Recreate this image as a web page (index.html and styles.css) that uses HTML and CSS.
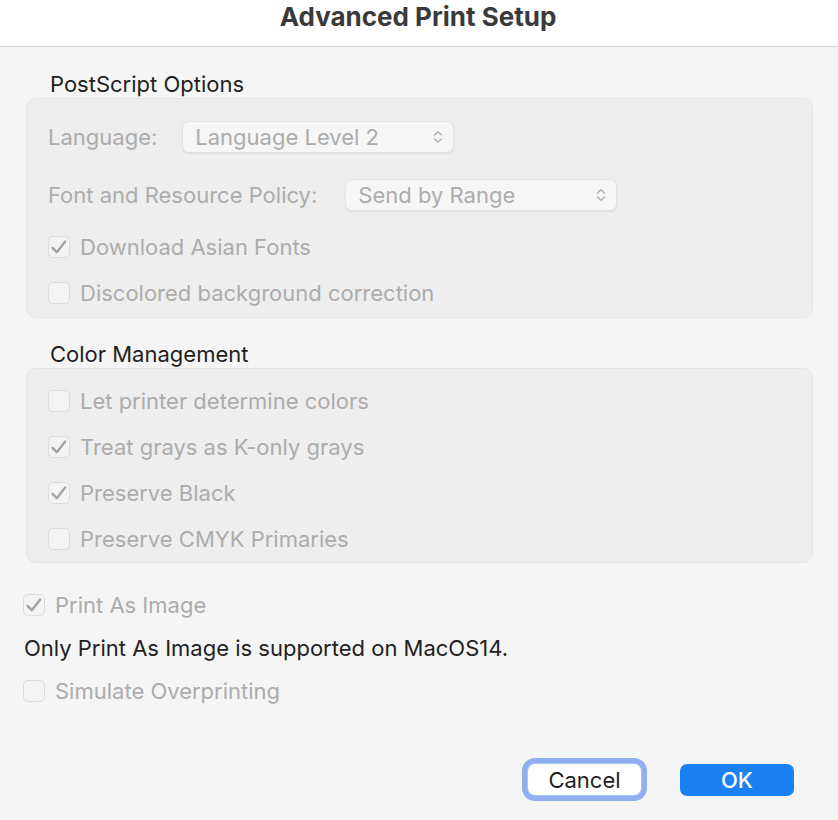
FILE: index.html
```html
<!DOCTYPE html>
<html>
<head>
<meta charset="utf-8">
<title>Advanced Print Setup</title>
<link rel="stylesheet" href="styles.css">
</head>
<body>
<div class="window">
  <header class="titlebar">Advanced Print Setup</header>
  <main class="content">
    <div class="section-title">PostScript Options</div>
    <div class="group group-ps">
      <div class="field-row row-lang">
        <span class="label">Language:</span>
        <div class="popup popup-lang">
          <span>Language Level 2</span>
          <svg class="chev" width="10" height="14" viewBox="0 0 10 14"><path d="M1.5 5 L5 1.8 L8.5 5 M1.5 9 L5 12.2 L8.5 9" fill="none" stroke="#b4b4b4" stroke-width="1.6" stroke-linecap="round" stroke-linejoin="round"/></svg>
        </div>
      </div>
      <div class="field-row row-font">
        <span class="label">Font and Resource Policy:</span>
        <div class="popup popup-font">
          <span>Send by Range</span>
          <svg class="chev" width="10" height="14" viewBox="0 0 10 14"><path d="M1.5 5 L5 1.8 L8.5 5 M1.5 9 L5 12.2 L8.5 9" fill="none" stroke="#b4b4b4" stroke-width="1.6" stroke-linecap="round" stroke-linejoin="round"/></svg>
        </div>
      </div>
      <div class="check-row row-after-font">
        <span class="box checked"><svg width="18" height="16" viewBox="0 0 18 16"><path d="M2.5 8.8 L6.8 13.2 L15.2 2.6" fill="none" stroke="#a3a3a3" stroke-width="2.4" stroke-linecap="round" stroke-linejoin="round"/></svg></span>
        <span class="label">Download Asian Fonts</span>
      </div>
      <div class="check-row">
        <span class="box"></span>
        <span class="label">Discolored background correction</span>
      </div>
    </div>

    <div class="section-title section-title-2">Color Management</div>
    <div class="group group-cm">
      <div class="check-row">
        <span class="box"></span>
        <span class="label">Let printer determine colors</span>
      </div>
      <div class="check-row">
        <span class="box checked"><svg width="18" height="16" viewBox="0 0 18 16"><path d="M2.5 8.8 L6.8 13.2 L15.2 2.6" fill="none" stroke="#a3a3a3" stroke-width="2.4" stroke-linecap="round" stroke-linejoin="round"/></svg></span>
        <span class="label">Treat grays as K-only grays</span>
      </div>
      <div class="check-row">
        <span class="box checked"><svg width="18" height="16" viewBox="0 0 18 16"><path d="M2.5 8.8 L6.8 13.2 L15.2 2.6" fill="none" stroke="#a3a3a3" stroke-width="2.4" stroke-linecap="round" stroke-linejoin="round"/></svg></span>
        <span class="label">Preserve Black</span>
      </div>
      <div class="check-row">
        <span class="box"></span>
        <span class="label">Preserve CMYK Primaries</span>
      </div>
    </div>

    <div class="outer">
      <div class="check-row">
        <span class="box checked"><svg width="18" height="16" viewBox="0 0 18 16"><path d="M2.5 8.8 L6.8 13.2 L15.2 2.6" fill="none" stroke="#a3a3a3" stroke-width="2.4" stroke-linecap="round" stroke-linejoin="round"/></svg></span>
        <span class="label">Print As Image</span>
      </div>
      <div class="note">Only Print As Image is supported on MacOS14.</div>
      <div class="check-row">
        <span class="box"></span>
        <span class="label">Simulate Overprinting</span>
      </div>
    </div>

    <div class="buttons">
      <button class="btn btn-cancel">Cancel</button>
      <button class="btn btn-ok">OK</button>
    </div>
  </main>
</div>
</body>
</html>
```

FILE: styles.css
```css
html, body {
  margin: 0;
  padding: 0;
}
body {
  background: #f5f5f5;
  font-family: Inter, "Liberation Sans", sans-serif;
  font-size: 22px;
  width: 838px;
  height: 820px;
  overflow: hidden;
}
.window {
  display: flex;
  flex-direction: column;
}
.titlebar {
  height: 46px;
  line-height: 34px;
  background: #ffffff;
  border-bottom: 1px solid #d6d6d6;
  text-align: center;
  font-weight: 700;
  font-size: 26px;
  color: #3a3a3a;
  padding-right: 2px;
}
.content {
  padding: 0 25px 0 26px;
  display: flex;
  flex-direction: column;
}
.section-title {
  margin-top: 25px;
  height: 24px;
  line-height: 24px;
  padding-left: 24px;
  color: #1f1f1f;
}
.section-title-2 {
  margin-top: 24px;
}
.group {
  margin-top: 2px;
  background: #eeeeee;
  border: 1px solid #e5e5e5;
  border-radius: 10px;
  display: flex;
  flex-direction: column;
  padding-left: 20px;
}
.group-ps {
  padding-top: 15px;
  height: 203px;
}
.group-cm {
  padding-top: 9px;
  height: 184px;
}
.label {
  color: #acacac;
  white-space: nowrap;
}
.field-row {
  height: 46px;
  display: flex;
  align-items: center;
}
.row-lang .label { margin-left: 1px; margin-right: 25px; }
.row-font { margin-top: 12px; }
.row-font .label { margin-left: 1px; margin-right: 28px; }
.row-after-font { margin-top: 6px; }
.popup {
  height: 32px;
  box-sizing: border-box;
  background: #f6f6f6;
  border: 1px solid #e3e3e3;
  border-radius: 7px;
  box-shadow: 0 1px 1.5px rgba(0, 0, 0, 0.08);
  display: flex;
  align-items: center;
  justify-content: space-between;
  padding: 0 10px 0 12px;
  color: #acacac;
}
.popup-lang { width: 272px; }
.popup-font { width: 272px; }
.chev { display: block; }
.check-row {
  height: 46px;
  display: flex;
  align-items: center;
}
.box {
  width: 22px;
  height: 22px;
  box-sizing: border-box;
  border: 1px solid #dcdcdc;
  border-radius: 5px;
  background: #f4f4f4;
  margin-right: 10px;
  margin-left: 1px;
  display: flex;
  align-items: center;
  justify-content: center;
  flex: none;
}
.box svg { display: block; margin-top: 0; }
.outer {
  margin-top: 19px;
  margin-left: -4px;
  display: flex;
  flex-direction: column;
}
.note {
  height: 40px;
  line-height: 40px;
  color: #222222;
  margin-left: 2px;
}
.buttons {
  margin-top: 50px;
  display: flex;
  justify-content: flex-end;
  gap: 39px;
  padding-right: 19px;
}
.btn {
  font-family: Inter, "Liberation Sans", sans-serif;
  font-size: 22px;
  border: none;
  padding: 0;
  margin: 0;
  height: 31px;
  border-radius: 7px;
}
.btn-cancel {
  width: 113px;
  background: #ffffff;
  color: #1f1f1f;
  box-shadow: 0 0 0 1px #a9c2f0, 0 0 0 6px #8eb0f0;
}
.btn-ok {
  width: 114px;
  height: 32px;
  background: #1b80f2;
  color: #ffffff;
  font-weight: 500;
}
```
